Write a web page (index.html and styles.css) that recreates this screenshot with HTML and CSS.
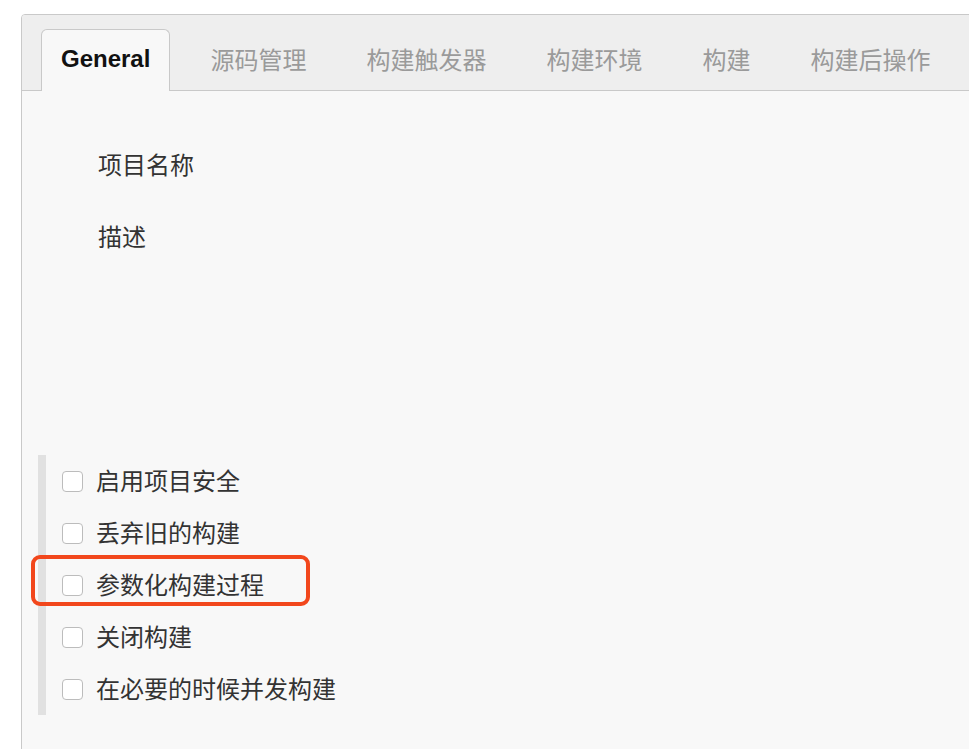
FILE: index.html
```html
<!DOCTYPE html>
<html>
<head>
    <meta charset="UTF-8">
    <title>General</title>
    <link rel="stylesheet" href="styles.css">
</head>
<body>
    <div class="panel">
        <div class="tabbar">
            <div class="tab active">General</div>
            <div class="tab">源码管理</div>
            <div class="tab">构建触发器</div>
            <div class="tab">构建环境</div>
            <div class="tab">构建</div>
            <div class="tab">构建后操作</div>
        </div>

        <div class="content">
            <div class="field">项目名称</div>
            <div class="field">描述</div>

            <!-- options -->
            <div class="options">
                <label class="option"><span class="box"></span>启用项目安全</label>
                <label class="option"><span class="box"></span>丢弃旧的构建</label>
                <label class="option"><span class="box"></span>参数化构建过程</label>
                <label class="option"><span class="box"></span>关闭构建</label>
                <label class="option"><span class="box"></span>在必要的时候并发构建</label>
                <div class="highlight"></div>
            </div>
        </div>
    </div>
</body>
</html>
```

FILE: styles.css
```css
html, body {
    margin: 0;
    padding: 0;
    background-color: #fff;
    overflow: hidden;
}

body {
    font-family: "Liberation Sans", "Noto Sans CJK SC", sans-serif;
    color: #333;
}

.panel {
    margin: 14px -20px 0 21px;
    height: 760px;
    border: 1px solid #c9c9c9;
    border-radius: 4px 0 0 0;
    background-color: #f8f8f8;
    overflow: hidden;
}

.tabbar {
    display: flex;
    align-items: flex-end;
    gap: 20px;
    height: 61px;
    padding: 14px 0 0 19px;
    background-color: #eee;
    border-bottom: 1px solid #c9c9c9;
}

.tab {
    display: flex;
    align-items: center;
    height: 57px;
    margin-bottom: -1px;
    padding: 0 19px 4px;
    border: 1px solid transparent;
    border-bottom: none;
    border-radius: 6px 6px 0 0;
    font-family: "Noto Sans CJK SC", sans-serif;
    font-size: 24px;
    color: #9a9a9a;
}

.tab.active {
    background-color: #f8f8f8;
    border-color: #c9c9c9;
    font-family: "Liberation Sans", sans-serif;
    font-weight: bold;
    color: #111;
}

.content {
    padding-top: 37px;
}

.field {
    height: 72px;
    line-height: 72px;
    padding-left: 76px;
    font-family: "Noto Sans CJK SC", sans-serif;
    font-size: 24px;
}

.options {
    position: relative;
    margin: 183px 0 0 16px;
    padding-left: 16px;
    border-left: 8px solid #e1e1e1;
}

.option {
    display: flex;
    align-items: center;
    height: 49px;
    padding-bottom: 3px;
    font-family: "Noto Sans CJK SC", sans-serif;
    font-size: 24px;
}

.box {
    width: 19px;
    height: 19px;
    margin: 3px 13px 0 0;
    border: 1px solid #bcbcbc;
    border-radius: 4px;
    background-color: #fff;
}

.highlight {
    position: absolute;
    left: -15px;
    top: 100px;
    width: 271px;
    height: 43px;
    border: 4px solid #f2471c;
    border-radius: 9px;
}
```
